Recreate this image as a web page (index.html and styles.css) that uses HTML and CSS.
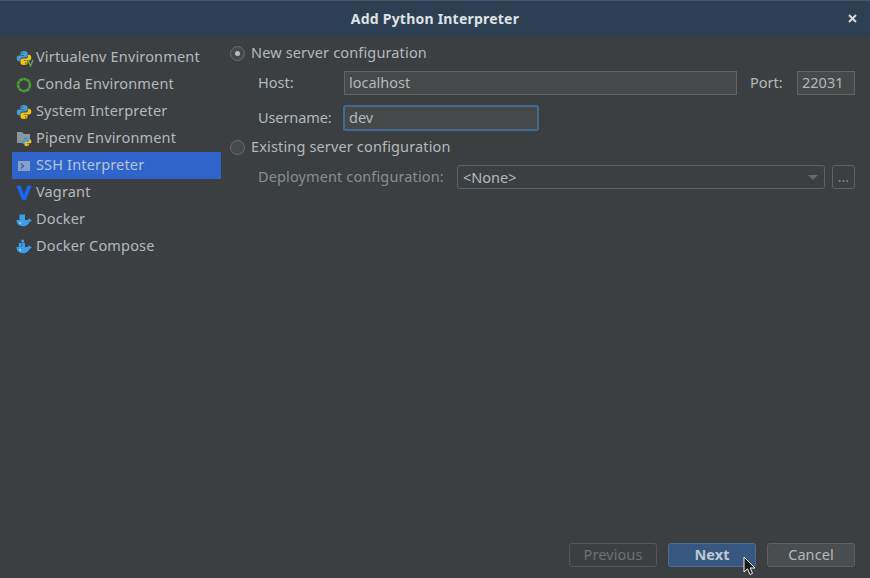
FILE: index.html
```html
<!DOCTYPE html>
<html lang="en">
<head>
    <meta charset="UTF-8">
    <meta name="viewport" content="width=device-width, initial-scale=1.0">
    <title>Add Python Interpreter</title>
    <link rel="stylesheet" href="styles.css">
</head>
<body>
    <svg class="defs" width="0" height="0">
        <symbol id="python" viewBox="0 0 16 16">
            <path fill="#3f9fd6" d="M8 1C5.600 1 4.500 1.800 4.500 3.200V5H8.200V5.600H3C1.600 5.600 .7 6.700 .7 8.300S1.500 11.300 3 11.300H4.300V9.500C4.300 8.300 5.200 7.500 6.400 7.500H9.600C10.700 7.500 11.500 6.700 11.500 5.600V3.200C11.500 1.800 10.200 1 8 1Z"/>
            <path fill="#f2c31a" d="M8 15C10.400 15 11.500 14.200 11.500 12.800V11H7.800V10.400H13C14.400 10.400 15.300 9.300 15.300 7.700S14.500 4.700 13 4.700H11.900V6.400C11.900 7.600 11 8.400 9.800 8.400H6.400C5.300 8.400 4.500 9.200 4.500 10.300V12.800C4.500 14.200 5.800 15 8 15Z"/>
            <circle cx="6.200" cy="3" r=".7" fill="#3c3f41"/>
            <circle cx="9.800" cy="13" r=".7" fill="#3c3f41"/>
        </symbol>
        <symbol id="docker" viewBox="0 0 16 16">
            <path fill="#3d9ee8" d="M.5 8H12C12.100 7 12.700 6.400 13.300 6.600C13.900 6.900 14.100 7.400 14.200 7.800C14.800 7.700 15.400 7.800 15.800 8.200C15.200 9.300 14.400 9.700 13.700 9.700C12.700 12.400 10.500 14.200 7 14.200C2.800 14.200 .7 12 .5 8Z"/>
            <circle cx="4.200" cy="10.800" r=".9" fill="#cfe6f8"/>
        </symbol>
    </svg>

    <header class="titlebar">
        <span class="title">Add Python Interpreter</span>
        <svg class="close" width="9" height="9" viewBox="0 0 9 9"><path d="M1 1L8 8M8 1L1 8" stroke="#d6d9db" stroke-width="2"/></svg>
    </header>

    <div class="dialog">
        <ul class="sidebar">
            <li class="item">
                <span class="icon">
                    <svg width="16" height="16"><use href="#python"/></svg>
                    <svg class="badge" width="7" height="8" viewBox="0 0 7 8"><path d="M1 1L3.500 7L6 1" fill="none" stroke="#62b543" stroke-width="1.300"/></svg>
                </span>
                <span class="label">Virtualenv Environment</span>
            </li>
            <li class="item">
                <span class="icon">
                    <svg width="16" height="16" viewBox="0 0 16 16"><circle cx="8" cy="8" r="6" fill="none" stroke="#4f9a3b" stroke-width="2.600" stroke-dasharray="3.400 .4"/></svg>
                </span>
                <span class="label">Conda Environment</span>
            </li>
            <li class="item">
                <span class="icon"><svg width="16" height="16"><use href="#python"/></svg></span>
                <span class="label">System Interpreter</span>
            </li>
            <li class="item">
                <span class="icon">
                    <svg width="16" height="16" viewBox="0 0 16 16">
                        <path fill="#8b969e" d="M1 1H6L8 3H14V12H1Z"/>
                        <g transform="translate(5.500 5.500) scale(.65)"><use href="#python" width="16" height="16"/></g>
                    </svg>
                </span>
                <span class="label">Pipenv Environment</span>
            </li>
            <li class="item selected">
                <span class="icon">
                    <svg width="16" height="16" viewBox="0 0 16 16">
                        <path fill="#8a9fc4" d="M2 3H14V13H2Z"/>
                        <path fill="none" stroke="#2f65ca" stroke-width="1.500" d="M5 5.500L7.500 8L5 10.500"/>
                    </svg>
                </span>
                <span class="label">SSH Interpreter</span>
            </li>
            <li class="item">
                <span class="icon">
                    <svg width="16" height="16" viewBox="0 0 16 16">
                        <path fill="#1868f2" d="M.5 1.200L4.600 .6 8 9.500 11.400 .6 15.500 1.200 9.900 15H6.100Z"/>
                    </svg>
                </span>
                <span class="label">Vagrant</span>
            </li>
            <li class="item">
                <span class="icon">
                    <svg width="16" height="16" viewBox="0 0 16 16">
                        <use href="#docker" width="16" height="16"/>
                        <path fill="#3d9ee8" d="M3.500 2.500H9V8H3.500Z"/>
                    </svg>
                </span>
                <span class="label">Docker</span>
            </li>
            <li class="item">
                <span class="icon">
                    <svg width="16" height="16" viewBox="0 0 16 16">
                        <use href="#docker" width="16" height="16"/>
                        <path fill="#3d9ee8" d="M5.300 .8H8.100V3.500H5.300ZM2.800 4.100H5.600V8H2.800ZM6.200 4.100H9V8H6.200Z"/>
                    </svg>
                </span>
                <span class="label">Docker Compose</span>
            </li>
        </ul>

        <main class="form">
            <div class="radio-row">
                <span class="radio checked"></span>
                <span class="label">New server configuration</span>
            </div>
            <div class="row host-row">
                <span class="field-label host-label">Host:</span>
                <input class="input host-input" value="localhost">
                <span class="field-label port-label">Port:</span>
                <input class="input port-input" value="22031">
            </div>
            <div class="row user-row">
                <span class="field-label user-label">Username:</span>
                <input class="input user-input" value="dev">
            </div>
            <div class="radio-row existing">
                <span class="radio"></span>
                <span class="label">Existing server configuration</span>
            </div>
            <div class="row deploy-row">
                <span class="field-label muted">Deployment configuration:</span>
                <div class="select">
                    &lt;None&gt;
                    <span class="arrow"></span>
                </div>
                <div class="dots">...</div>
            </div>
        </main>
    </div>

    <footer class="buttons">
        <button class="btn disabled">Previous</button>
        <button class="btn primary">Next</button>
        <button class="btn">Cancel</button>
    </footer>

    <svg class="cursor" width="14" height="21" viewBox="0 0 14 21">
        <path d="M1 1V16L4.500 12.800L7 18.500L9.500 17.400L7.200 12H12Z" fill="#1a1a1a" stroke="#f2f2f2" stroke-width="1"/>
    </svg>
</body>
</html>
```

FILE: styles.css
```css
* {
    box-sizing: border-box;
}
html, body {
    height: 100%;
}
body {
    margin: 0;
    position: relative;
    display: flex;
    flex-direction: column;
    overflow: hidden;
    background: #3c3f41;
    color: #b4b8bb;
    font-family: "Noto Sans", sans-serif;
    font-size: 14px;
}
.defs {
    position: absolute;
}
.titlebar {
    flex: none;
    height: 36px;
    display: flex;
    align-items: center;
    justify-content: center;
    background: #2d3f52;
    border-top: 1px solid #4a5866;
    position: relative;
}
.title {
    color: #dfe2e4;
    font-size: 14px;
    font-weight: 700;
    letter-spacing: .22px;
}
.close {
    position: absolute;
    right: 13px;
    top: 13px;
}
.dialog {
    flex: 1;
    display: flex;
    padding-top: 7px;
}
.sidebar {
    width: 209px;
    margin: 1px 9px 0 12px;
    padding: 0;
    list-style: none;
}
.item {
    height: 27px;
    display: flex;
    align-items: center;
    gap: 4px;
    padding-left: 4px;
    font-size: 14.500px;
    letter-spacing: .16px;
}
.label {
    margin-bottom: 3px;
}
.item.selected {
    background: #2f65ca;
    color: #b8c3d6;
}
.icon {
    position: relative;
    width: 16px;
    height: 16px;
    flex: none;
}
.icon svg {
    display: block;
}
.icon .badge {
    position: absolute;
    right: -2px;
    bottom: -1px;
}
.form {
    flex: 1;
    padding-right: 15px;
}
.radio-row {
    display: flex;
    align-items: center;
    gap: 6px;
    height: 20px;
    font-size: 14.500px;
    letter-spacing: .15px;
}
.radio-row .label {
    margin-bottom: 2px;
}
.radio {
    width: 15px;
    height: 15px;
    border: 1px solid #6b6b6b;
    border-radius: 50%;
    background: #45494a;
    position: relative;
}
.radio.checked::after {
    content: "";
    position: absolute;
    left: 4px;
    top: 4px;
    width: 5px;
    height: 5px;
    border-radius: 50%;
    background: #bbbbbb;
}
.row {
    display: flex;
    align-items: center;
    padding-left: 28px;
}
.field-label {
    font-size: 14.500px;
    margin-bottom: 2px;
}
.input {
    height: 24px;
    padding: 0 4px 2px;
    border: 1px solid #646464;
    background: #45494a;
    color: #b4b8bb;
    font: 14.500px "Noto Sans", sans-serif;
    outline: none;
}
.host-row {
    margin-top: 8px;
}
.host-label {
    width: 86px;
}
.host-input {
    width: 393px;
}
.port-label {
    margin-left: 13px;
    width: 47px;
}
.port-input {
    width: 58px;
}
.user-row {
    margin-top: 10px;
}
.user-label {
    width: 85px;
    letter-spacing: -.1px;
}
.user-input {
    width: 196px;
    height: 26px;
    padding-left: 5px;
    border: 1px solid #3f6a94;
    box-shadow: inset 0 0 0 1px #3f6a94;
    border-radius: 2px;
}
.existing {
    margin-top: 6px;
}
.deploy-row {
    margin-top: 8px;
}
.muted {
    color: #8a8d8f;
    width: 199px;
    letter-spacing: .12px;
}
.select {
    width: 368px;
    height: 24px;
    display: flex;
    align-items: center;
    padding: 0 0 0 5px;
    border: 1px solid #5e6060;
    border-radius: 3px;
    font-size: 14.500px;
    position: relative;
}
.arrow {
    position: absolute;
    right: 6px;
    top: 9px;
    border-left: 5px solid transparent;
    border-right: 5px solid transparent;
    border-top: 5px solid #666869;
}
.dots {
    width: 23px;
    height: 24px;
    margin-left: 7px;
    border: 1px solid #5e6060;
    border-radius: 3px;
    color: #8a8d8f;
    text-align: center;
    line-height: 22px;
}
.buttons {
    flex: none;
    display: flex;
    justify-content: flex-end;
    gap: 11px;
    padding: 0 15px 11px 0;
}
.btn {
    width: 88px;
    height: 24px;
    padding: 0 0 2px;
    border: 1px solid #5e6060;
    border-radius: 3px;
    background: #4a4d4f;
    color: #b4b8bb;
    font: 14.500px "Noto Sans", sans-serif;
    letter-spacing: .1px;
}
.btn.disabled {
    background: transparent;
    border-color: #54575a;
    color: #6e7072;
}
.btn.primary {
    background: #365880;
    border-color: #4c708c;
    color: #c0c8d0;
    font-weight: 700;
}
.cursor {
    position: absolute;
    left: 743px;
    top: 556px;
}
```
